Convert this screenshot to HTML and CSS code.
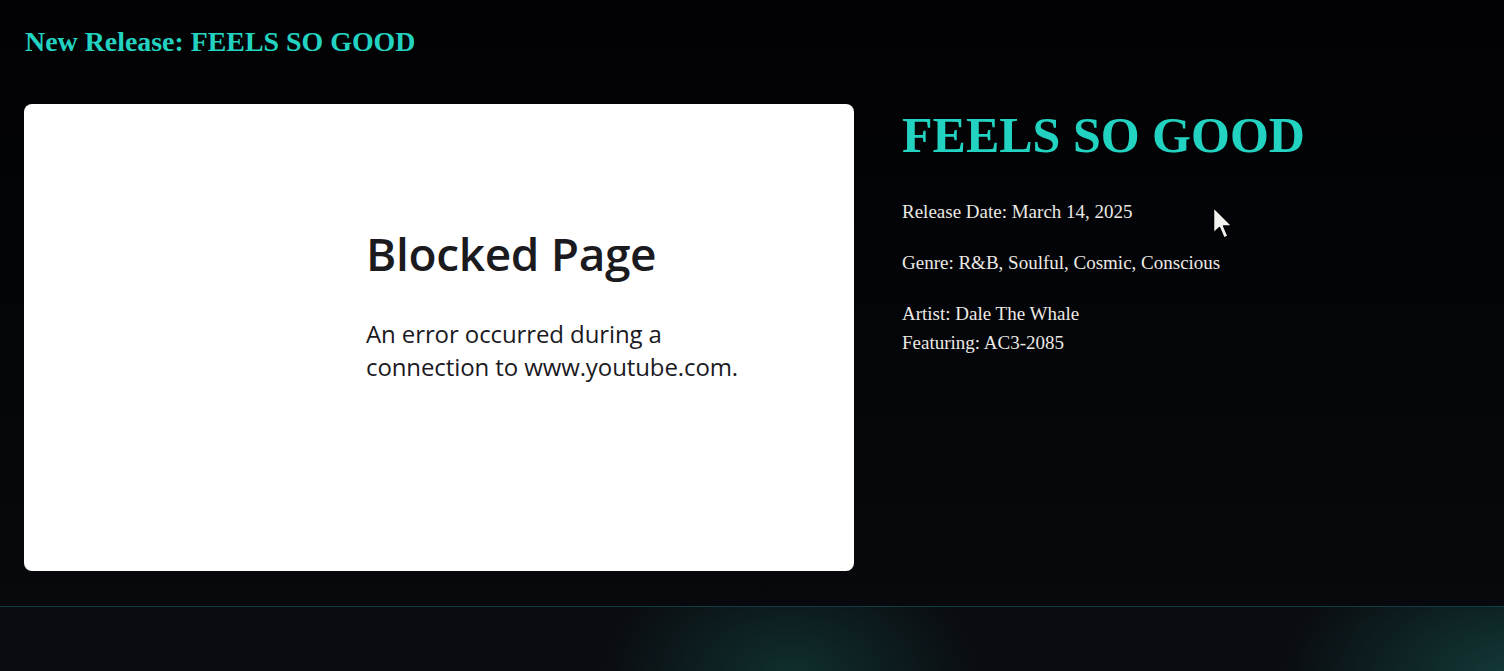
FILE: index.html
```html
<!DOCTYPE html>
<html lang="en">
<head>
<meta charset="utf-8">
<title>New Release: FEELS SO GOOD</title>
<link rel="stylesheet" href="styles.css">
</head>
<body>
<div class="page">
  <header class="topbar">
    <h2 class="topbar-title">New Release: FEELS SO GOOD</h2>
  </header>
  <main class="release">
    <div class="video-card">
      <div class="blocked">
        <h3 class="blocked-title">Blocked Page</h3>
        <p class="blocked-text">An error occurred during a<br>connection to www.youtube.com.</p>
      </div>
    </div>
    <section class="details">
      <h1 class="details-title">FEELS SO GOOD</h1>
      <p class="detail">Release Date: March 14, 2025</p>
      <p class="detail">Genre: R&amp;B, Soulful, Cosmic, Conscious</p>
      <p class="detail">Artist: Dale The Whale<br>Featuring: AC3-2085</p>
    </section>
  </main>
  <footer class="footer"></footer>
  <svg class="cursor" width="22" height="36" viewBox="0 0 22 36" aria-hidden="true">
    <path d="M1.5 1.5 L1.5 27 L7.5 21.5 L12 32 L16 30.3 L11.6 20 L20 20 Z" fill="#f2f2f0" stroke="#000" stroke-width="1.5" stroke-linejoin="round"/>
  </svg>
</div>
</body>
</html>
```

FILE: styles.css
```css
* { box-sizing: border-box; }
html, body { margin: 0; padding: 0; }
body {
  background: #020204;
  color: #ece9e4;
  font-family: "Liberation Serif", "Times New Roman", serif;
  height: 671px;
  overflow: hidden;
}
.page {
  position: relative;
  display: flex;
  flex-direction: column;
  min-height: 671px;
  background: linear-gradient(180deg, #020204 0%, #04060a 60%, #07090d 90%);
}
.topbar {
  padding: 25px 25px 0;
}
.topbar-title {
  margin: 0;
  font-size: 27.9px;
  line-height: 34px;
  font-weight: 700;
  color: #22d3c1;
}
.release {
  display: grid;
  grid-template-columns: 830px 1fr;
  column-gap: 48px;
  padding: 45px 24px 35px;
  align-items: start;
}
.video-card {
  height: 467px;
  background: #ffffff;
  border-radius: 8px;
  overflow: hidden;
  padding: 121px 40px 0 342px;
}
.blocked-title {
  margin: 0;
  font-family: "Open Sans", "Noto Sans", sans-serif;
  font-weight: 600;
  font-size: 46px;
  line-height: 56px;
  color: #1b1a1f;
  letter-spacing: -0.35px;
}
.blocked-text {
  margin: 36px 0 0;
  font-family: "Open Sans", "Noto Sans", sans-serif;
  font-size: 24px;
  line-height: 33px;
  color: #1b1a1f;
  white-space: nowrap;
  letter-spacing: -0.1px;
}
.details {
  padding-top: 1px;
}
.details-title {
  margin: 0 0 32px;
  font-size: 50px;
  line-height: 60px;
  font-weight: 700;
  color: #22d3c1;
}
.detail {
  margin: 0 0 22px;
  font-size: 19px;
  line-height: 29px;
}
.footer {
  flex: 1;
  border-top: 1px solid #0f3d45;
  background:
    radial-gradient(ellipse 190px 130px at 790px 110%, rgba(22, 82, 75, 0.5), rgba(22, 82, 75, 0) 100%),
    radial-gradient(ellipse 230px 140px at 1510px 110%, rgba(24, 88, 80, 0.6), rgba(24, 88, 80, 0) 100%),
    #0a0c11;
}
.cursor {
  position: absolute;
  left: 1212px;
  top: 206px;
}
```
